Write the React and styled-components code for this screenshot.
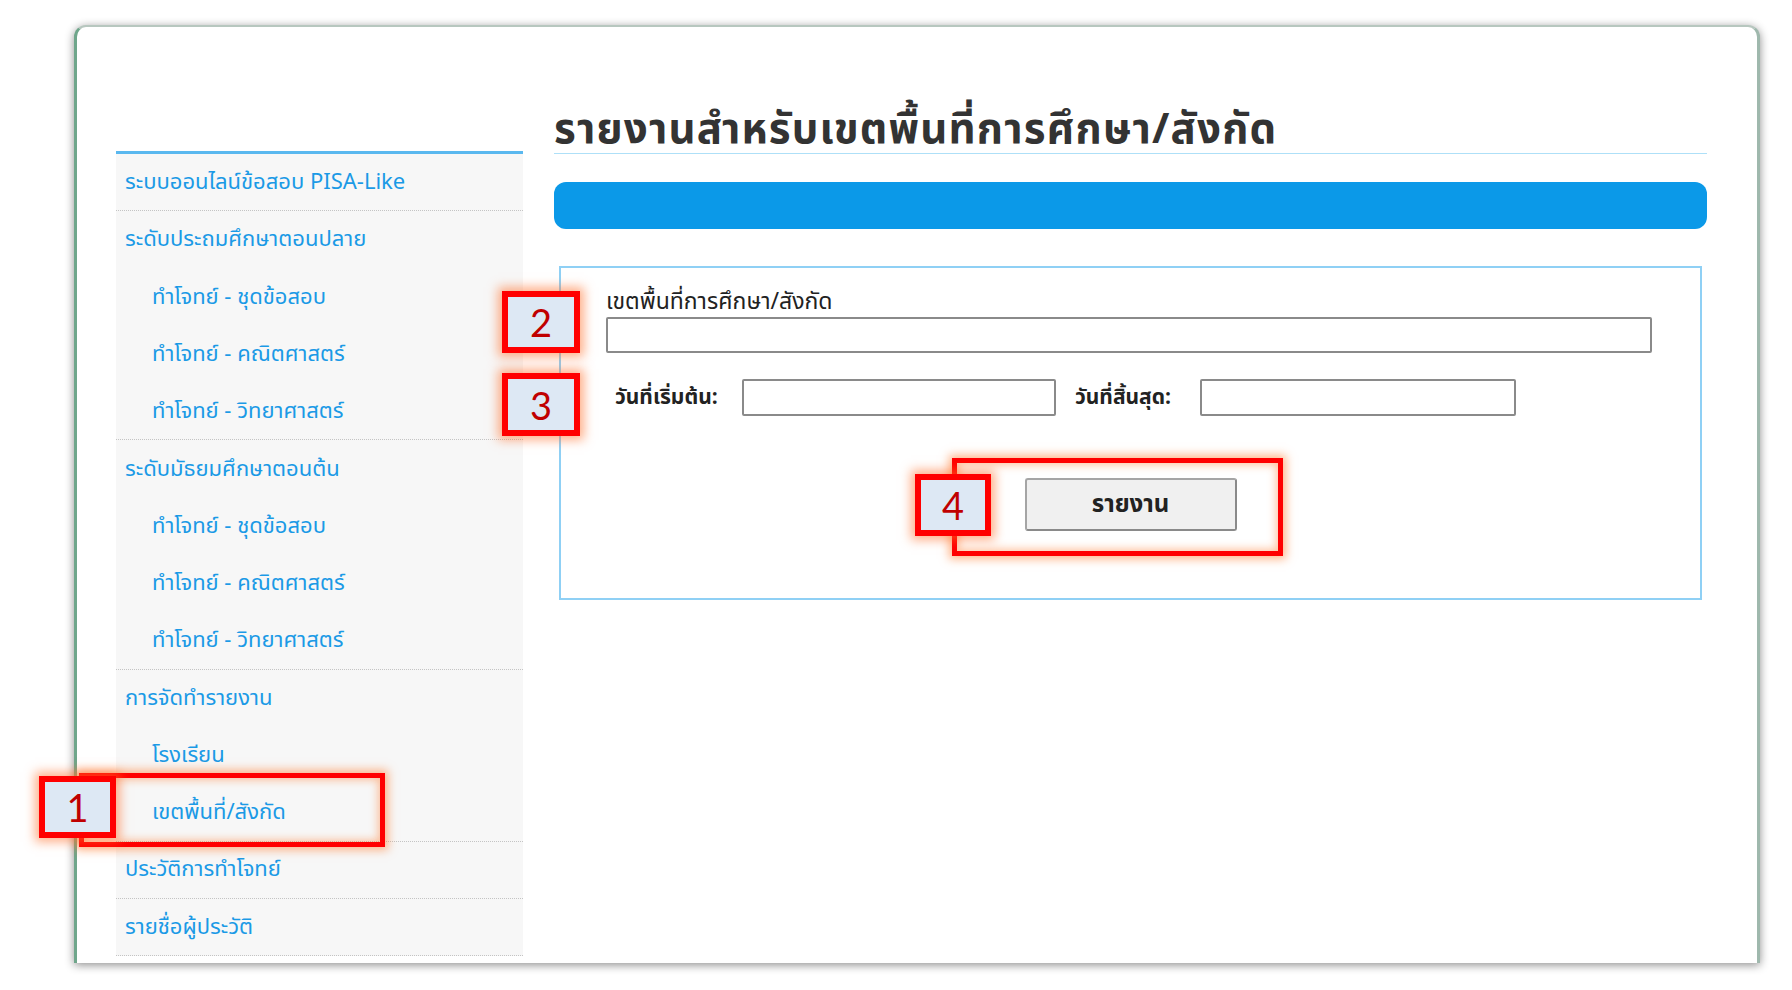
import React from "react";
import styled, { createGlobalStyle } from "styled-components";

const GlobalStyle = createGlobalStyle`
  html, body {
    margin: 0;
    padding: 0;
    background: #ffffff;
  }
  body {
    font-family: Tahoma, "Noto Sans Thai", "Noto Sans", "DejaVu Sans", sans-serif;
  }
`;

const Page = styled.div`
  position: relative;
  width: 1792px;
  height: 990px;
  padding: 25px 0 0 74px;
  box-sizing: border-box;
  overflow: hidden;
  background: #fff;
`;

const Card = styled.div`
  width: 1686px;
  height: 938px;
  box-sizing: border-box;
  background: #fff;
  border-left: 3px solid #6fa68b;
  border-right: 3px solid #9fb8ad;
  border-top: 2px solid #b7c7bf;
  border-radius: 12px 12px 0 0;
  box-shadow: 0 2px 10px rgba(0, 0, 0, 0.45);
  display: flex;
  align-items: flex-start;
  padding: 0 50px 0 39px;
  gap: 31px;
`;

const Sidebar = styled.nav`
  width: 407px;
  flex: none;
  margin-top: 124px;
  border-top: 3px solid #5ab8ef;
  background: #f7f7f7;
  display: flex;
  flex-direction: column;
`;

const MenuItem = styled.div`
  height: 57.3px;
  box-sizing: border-box;
  display: flex;
  align-items: center;
  padding-left: ${(p) => (p.sub ? 36 : 9)}px;
  font-size: 22px;
  color: #1b9ae6;
  white-space: nowrap;
  border-bottom: ${(p) => (p.last ? "1px dotted #c4c4c4" : "none")};
`;

const Main = styled.main`
  flex: 1;
  padding-top: 80px;
`;

const Title = styled.h1`
  margin: 0;
  font-size: 42px;
  letter-spacing: 1.2px;
  font-weight: bold;
  line-height: 46px;
  color: #333;
  border-bottom: 1px solid #aee0f8;
  white-space: nowrap;
`;

const Bar = styled.div`
  margin-top: 28px;
  height: 47px;
  border-radius: 12px;
  background: #0b99e8;
`;

const FormBox = styled.div`
  margin: 37px 5px 0 5px;
  height: 334px;
  box-sizing: border-box;
  border: 2px solid #8fd0f5;
  padding: 19px 0 0 45px;
`;

const Label = styled.div`
  font-size: ${(p) => (p.bold ? 21 : 23)}px;
  line-height: 30px;
  color: #222;
  white-space: nowrap;
  ${(p) => p.bold && "font-weight: bold;"}
  ${(p) => p.w && `width: ${p.w}px;`}
`;

const TextInput = styled.div`
  box-sizing: border-box;
  width: ${(p) => p.w}px;
  height: ${(p) => p.h}px;
  background: #fff;
  border: 2px solid #8a8a8a;
  border-radius: 2px;
`;

const DateRow = styled.div`
  display: flex;
  align-items: center;
  margin: 26px 0 0 9px;
  gap: 19px;
`;

const ButtonRow = styled.div`
  display: flex;
  justify-content: center;
  margin: 62px 0 0 -45px;
`;

const ReportButton = styled.button`
  width: 212px;
  height: 53px;
  background: #f0f0f0;
  border: 2px solid #a5a5a5;
  border-right-color: #8a8a8a;
  border-bottom-color: #8a8a8a;
  border-radius: 3px;
  font-family: inherit;
  font-size: 24px;
  font-weight: bold;
  color: #222;
`;

/* annotation overlays (callouts drawn over the screenshot) */
const Highlight = styled.div`
  position: absolute;
  box-sizing: border-box;
  border: 5px solid #ff0000;
  box-shadow: 0 0 9px 3px rgba(255, 120, 40, 0.55), inset 0 0 9px 2px rgba(255, 120, 40, 0.45);
`;

const Badge = styled.div`
  position: absolute;
  box-sizing: border-box;
  border: 6px solid #ff0000;
  background: #dde8f4;
  box-shadow: 0 0 10px 4px rgba(255, 110, 40, 0.55);
  display: flex;
  align-items: center;
  justify-content: center;
  font-family: Lato, "Open Sans", sans-serif;
  font-size: 38px;
  color: #c00000;
`;

const menu = [
  { text: "ระบบออนไลน์ข้อสอบ PISA-Like", last: true },
  { text: "ระดับประถมศึกษาตอนปลาย" },
  { text: "ทำโจทย์ - ชุดข้อสอบ", sub: true },
  { text: "ทำโจทย์ - คณิตศาสตร์", sub: true },
  { text: "ทำโจทย์ - วิทยาศาสตร์", sub: true, last: true },
  { text: "ระดับมัธยมศึกษาตอนต้น" },
  { text: "ทำโจทย์ - ชุดข้อสอบ", sub: true },
  { text: "ทำโจทย์ - คณิตศาสตร์", sub: true },
  { text: "ทำโจทย์ - วิทยาศาสตร์", sub: true, last: true },
  { text: "การจัดทำรายงาน" },
  { text: "โรงเรียน", sub: true },
  { text: "เขตพื้นที่/สังกัด", sub: true, last: true },
  { text: "ประวัติการทำโจทย์", last: true },
  { text: "รายชื่อผู้ประวัติ", last: true },
];

const callouts = [
  { n: "1", x: 39, y: 776, w: 77, h: 62 },
  { n: "2", x: 502, y: 291, w: 78, h: 62 },
  { n: "3", x: 502, y: 373, w: 78, h: 63 },
  { n: "4", x: 915, y: 474, w: 76, h: 62 },
];

function App() {
  return (
    <>
      <GlobalStyle />
      <Page>
        <Card>
          <Sidebar>
            {menu.map((m, i) => (
              <MenuItem key={i} sub={m.sub} last={m.last}>
                {m.text}
              </MenuItem>
            ))}
          </Sidebar>
          <Main>
            <Title>รายงานสำหรับเขตพื้นที่การศึกษา/สังกัด</Title>
            <Bar />
            <FormBox>
              <Label>เขตพื้นที่การศึกษา/สังกัด</Label>
              <TextInput w={1046} h={36} />
              <DateRow>
                <Label bold w={108}>วันที่เริ่มต้น:</Label>
                <TextInput w={314} h={37} />
                <Label bold w={106}>วันที่สิ้นสุด:</Label>
                <TextInput w={316} h={37} />
              </DateRow>
              <ButtonRow>
                <ReportButton>รายงาน</ReportButton>
              </ButtonRow>
            </FormBox>
          </Main>
        </Card>

        <Highlight style={{ left: 79, top: 773, width: 306, height: 74 }} />
        <Highlight style={{ left: 952, top: 458, width: 331, height: 98 }} />
        {callouts.map((c) => (
          <Badge key={c.n} style={{ left: c.x, top: c.y, width: c.w, height: c.h }}>
            {c.n}
          </Badge>
        ))}
      </Page>
    </>
  );
}

export default App;
